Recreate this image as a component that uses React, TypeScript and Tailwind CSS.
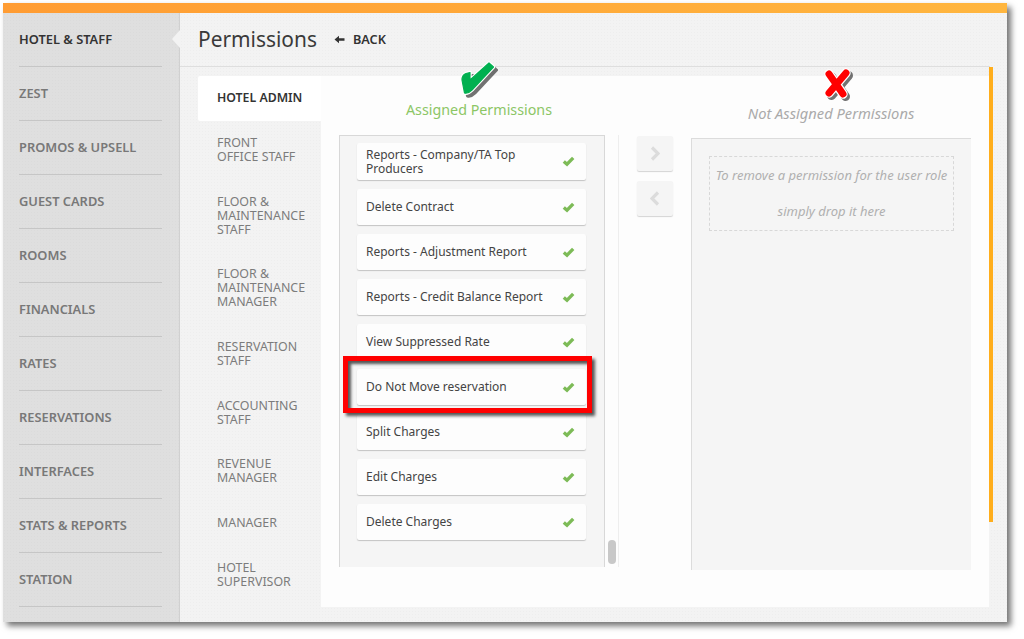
import { Fragment } from "react";

const font = "font-['Noto_Sans','Liberation_Sans',sans-serif]";
const texture = "bg-[radial-gradient(rgba(0,0,0,0.02)_1px,transparent_1px)] bg-[length:3px_3px]";

const sideItems = ["HOTEL & STAFF","ZEST","PROMOS & UPSELL","GUEST CARDS","ROOMS","FINANCIALS","RATES","RESERVATIONS","INTERFACES","STATS & REPORTS","STATION"];
const tabs = [["FRONT","OFFICE STAFF"],["FLOOR &","MAINTENANCE","STAFF"],["FLOOR &","MAINTENANCE","MANAGER"],["RESERVATION","STAFF"],["ACCOUNTING","STAFF"],["REVENUE","MANAGER"],["MANAGER"],["HOTEL","SUPERVISOR"]];
const perms = ["Delete Contract","Reports - Adjustment Report","Reports - Credit Balance Report","View Suppressed Rate","Do Not Move reservation","Split Charges","Edit Charges","Delete Charges"];

function Lines({ lines }: { lines: string[] }) {
  return (
    <>
      {lines.map((l, i) => (
        <Fragment key={i}>
          {i > 0 && <br />}
          {l}
        </Fragment>
      ))}
    </>
  );
}

function SmallCheck() {
  return (
    <svg width="13" height="11" viewBox="0 0 13 11" className="shrink-0">
      <path d="M1.8 5.4 L5 8.2 L11.2 1.8" fill="none" stroke="#7dbb57" strokeWidth="3.3" />
    </svg>
  );
}

function PermItem({ label, lines }: { label?: string; lines?: string[] }) {
  return (
    <div className={`flex items-center justify-between bg-[#fdfdfd] rounded-[2px] shadow-[0_1px_1px_#c4c4c4] pl-[9px] pr-[11px] text-[12px] leading-[14px] text-[#444] ${lines ? "h-[37px]" : "h-[36px]"}`}>
      <div>{lines ? <Lines lines={lines} /> : label}</div>
      <SmallCheck />
    </div>
  );
}

export default function App() {
  return (
    <div className={`w-[1024px] h-[639px] bg-white pl-[3px] pt-[3px] overflow-hidden ${font}`}>
      <div className="w-[1004px] h-[619px] flex flex-col shadow-[4px_4px_6px_rgba(0,0,0,0.55)]">
        <div className="h-[10px] shrink-0 bg-gradient-to-r from-[#ff9c33] to-[#ffb63f]" />
        <div className="flex flex-1 min-h-0">
          <aside className={`w-[177px] shrink-0 bg-[#dfdfdf] ${texture} shadow-[inset_-1px_0_1px_#cfcfcf] pl-[16px] pr-[18px]`}>
            {sideItems.map((s, i) => (
              <div key={s} className={`h-[54px] flex items-center pt-[1px] border-b border-[#c6c6c6] text-[12.85px] font-semibold ${i === 0 ? "text-[#333]" : "text-[#787878]"}`}>
                {s}
              </div>
            ))}
          </aside>
          <main className={`relative flex-1 bg-[#f3f3f3] ${texture} pr-[17px] flex flex-col min-w-0`}>
            <div className="absolute left-[-8px] top-[17px] w-0 h-0 border-y-[9px] border-y-transparent border-r-[8px] border-r-[#f3f3f3]" />
            <header className="h-[54px] shrink-0 border-b border-[#dedede] pl-[18px] flex items-center gap-[17px]">
              <h1 className="text-[20.9px] leading-none font-normal text-[#3a3a3a]">Permissions</h1>
              <div className="flex items-center gap-[8px] text-[12.7px] font-semibold text-[#333]">
                <svg width="11" height="9" viewBox="0 0 11 9"><path d="M0.5 4.5 L5 0.8 L5 3.2 L10.5 3.2 L10.5 5.8 L5 5.8 L5 8.2 Z" fill="#333" /></svg>
                BACK
              </div>
            </header>
            <div className="flex pl-[18px] pt-[9px]">
              <nav className="w-[123px] shrink-0">
                <div className="h-[45px] bg-white rounded-l-[2px] pl-[19px] flex items-center pb-[1px] text-[12.3px] font-semibold text-[#333]">HOTEL ADMIN</div>
                <div className="pl-[19px] pt-[15px] flex flex-col gap-[30.7px]">
                  {tabs.map((t, i) => (
                    <div key={i} className="text-[12.4px] leading-[14px] text-[#7c7c7c]">
                      <Lines lines={t} />
                    </div>
                  ))}
                </div>
              </nav>
              <section className="relative w-[668px] h-[531px] bg-[#fdfdfd] pl-[18px] pr-[18px] flex">
                <div className="w-[280px] shrink-0 flex flex-col">
                  <div className="h-[59px] shrink-0 flex items-end justify-center pb-[15px] text-[14.3px] leading-[20px] text-[#8cc665]">Assigned Permissions</div>
                  <div className="flex">
                    <div className="w-[266px] h-[432px] bg-[#f5f5f5] border-l border-t border-r border-[#d8d8d8] pl-[17px] pr-[18px] pt-[7px] flex flex-col gap-[9px] overflow-hidden">
                      <PermItem lines={["Reports - Company/TA Top","Producers"]} />
                      {perms.map((p) => <PermItem key={p} label={p} />)}
                    </div>
                    <div className="w-[14px] h-[432px] border-r border-[#eeeeee] relative">
                      <div className="absolute left-[3px] top-[405px] w-[8px] h-[24px] rounded-[4px] bg-[#c8c8c8]" />
                    </div>
                  </div>
                </div>
                <div className="w-[72px] shrink-0 pt-[60px] pl-[18px] flex flex-col gap-[10px]">
                  <div className="w-[36px] h-[35px] bg-[#f5f5f5] rounded-[2px] shadow-[0_1px_1px_#d4d4d4] flex items-center justify-center">
                    <svg width="10" height="15" viewBox="0 0 10 15"><path d="M2 1.5 L8 7.5 L2 13.5" fill="none" stroke="#dcdcdc" strokeWidth="3.2" /></svg>
                  </div>
                  <div className="w-[36px] h-[35px] bg-[#f5f5f5] rounded-[2px] shadow-[0_1px_1px_#d4d4d4] flex items-center justify-center">
                    <svg width="10" height="15" viewBox="0 0 10 15"><path d="M8 1.5 L2 7.5 L8 13.5" fill="none" stroke="#dcdcdc" strokeWidth="3.2" /></svg>
                  </div>
                </div>
                <div className="w-[280px] shrink-0 flex flex-col">
                  <div className="h-[62px] shrink-0 flex items-end justify-center pb-[15px] text-[14.7px] leading-[20px] italic text-[#aaaaaa]">Not Assigned Permissions</div>
                  <div className="h-[432px] bg-[#f5f5f5] border-t border-l border-[#dcdcdc] p-[17px]">
                    <div className="h-[75px] border border-dashed border-[#d8d8d8] flex flex-col items-center pt-[9px] gap-[17px] text-[13px] leading-[19px] italic text-[#b0b0b0]">
                      <div>To remove a permission for the user role</div>
                      <div>simply drop it here</div>
                    </div>
                  </div>
                </div>
              </section>
            </div>
            <div className="absolute left-[809px] top-0 w-[4px] h-[455px] mt-[54px] bg-[#ffae1c]" />
          </main>
        </div>
      </div>

      {/* annotations */}
      <div className="absolute left-[343px] top-[356px] w-[249px] h-[57px] border-[5px] border-[#ff0000] shadow-[3px_3px_3px_rgba(0,0,0,0.65),inset_3px_3px_3px_rgba(0,0,0,0.65)]" />
      <svg className="absolute left-[455px] top-[58px]" width="48" height="42" viewBox="0 0 48 42">
        <path d="M7 22 Q7 17 11 15.5 L15 14.5 L15 22 L34 5 L38.5 9 L17 32 Q13 36 9.5 35 Z" fill="#444" stroke="#444" strokeWidth="3" strokeLinejoin="round" opacity="0.75" transform="translate(3 3)" />
        <path d="M7 22 Q7 17 11 15.5 L15 14.5 L15 22 L34 5 L38.5 9 L17 32 Q13 36 9.5 35 Z" fill="#fff" stroke="#fff" strokeWidth="3.4" strokeLinejoin="round" />
        <path d="M7 22 Q7 17 11 15.5 L15 14.5 L15 22 L34 5 L38.5 9 L17 32 Q13 36 9.5 35 Z" fill="#00b050" stroke="#00b050" strokeWidth="1.2" strokeLinejoin="round" />
      </svg>
      <svg className="absolute left-[820px] top-[66px]" width="36" height="38" viewBox="0 0 36 38">
        <path d="M9 8 L23 28 M26 7 L9 27" fill="none" stroke="#444" strokeWidth="9" strokeLinecap="round" opacity="0.75" transform="translate(2.5 2.5)" />
        <path d="M9 8 L23 28 M26 7 L9 27" fill="none" stroke="#fff" strokeWidth="9.5" strokeLinecap="round" />
        <path d="M9 8 L23 28 M26 7 L9 27" fill="none" stroke="#ff0000" strokeWidth="7" strokeLinecap="round" />
      </svg>
    </div>
  );
}
